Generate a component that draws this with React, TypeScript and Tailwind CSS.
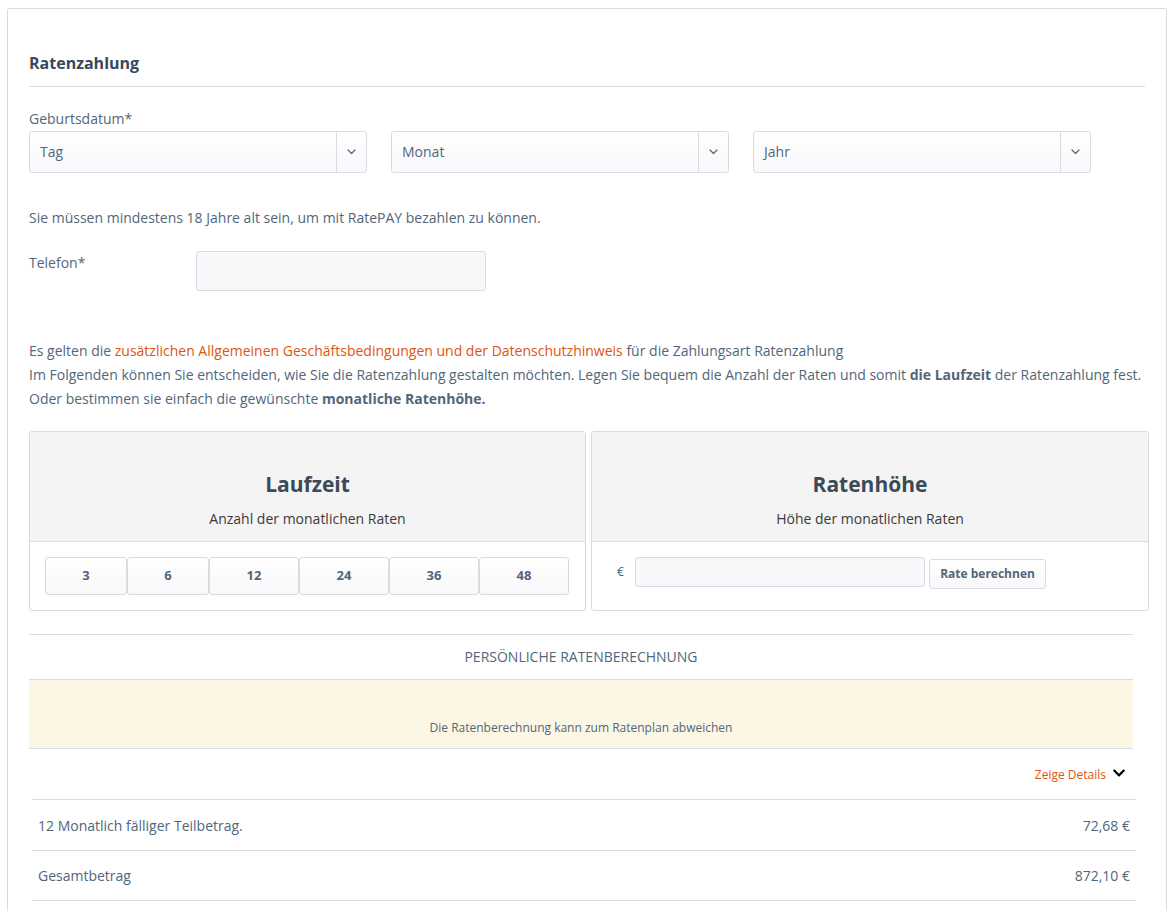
import React from "react";
import { FaChevronDown } from "react-icons/fa";

function Chevron() {
  return (
    <svg width="9" height="6" viewBox="0 0 9 6" fill="none">
      <path d="M1 1l3.5 3.5L8 1" stroke="#52667a" strokeWidth="1.2" strokeLinecap="round" strokeLinejoin="round" />
    </svg>
  );
}

function Select({ label }: { label: string }) {
  return (
    <div className="flex h-[42px] w-[338px] rounded-[3px] border border-[#dadae5] bg-gradient-to-b from-white to-[#f8f8fa]">
      <div className="flex flex-1 items-center pb-[1px] pl-[10px] text-[14px] text-[#52667a]">{label}</div>
      <div className="flex w-[30px] items-center justify-center border-l border-[#dadae5]">
        <Chevron />
      </div>
    </div>
  );
}

const rates = [
  { v: "3", w: "w-[82px]" },
  { v: "6", w: "w-[82px]" },
  { v: "12", w: "w-[90px]" },
  { v: "24", w: "w-[90px]" },
  { v: "36", w: "w-[90px]" },
  { v: "48", w: "w-[90px]" },
];

export default function App() {
  return (
    <div className="min-h-[911px] bg-white font-['Open_Sans',sans-serif] text-[#52667a]">
      <div className="ml-[7px] mt-[8px] w-[1160px] rounded-t-[3px] border border-b-0 border-[#dadae5] pb-[20px]">
        <div className="px-[21px] pt-[44px]">
          <div className="border-b border-[#dadae5] pb-[13px] text-[16px] font-bold leading-[20px] text-[#37495a]">
            Ratenzahlung
          </div>

          <div className="mt-[22px] text-[14px] leading-[20px]">Geburtsdatum*</div>
          <div className="mt-[2px] flex gap-[24px]">
            <Select label="Tag" />
            <Select label="Monat" />
            <Select label="Jahr" />
          </div>

          <div className="mt-[35px] text-[14px] leading-[20px]">
            Sie müssen mindestens 18 Jahre alt sein, um mit RatePAY bezahlen zu können.
          </div>

          <div className="mt-[23px] flex items-start">
            <div className="w-[167px] pt-[2px] text-[14px] leading-[20px]">Telefon*</div>
            <div className="h-[40px] w-[290px] rounded-[3px] border border-[#dadae5] bg-[#f8f8fa]" />
          </div>

          <div className="mt-[48px] text-[14px] leading-[24px]">
            <div>
              Es gelten die{" "}
              <span className="text-[#e1540f]">
                zusätzlichen Allgemeinen Geschäftsbedingungen und der Datenschutzhinweis
              </span>{" "}
              für die Zahlungsart Ratenzahlung
            </div>
            <div>
              Im Folgenden können Sie entscheiden, wie Sie die Ratenzahlung gestalten möchten. Legen Sie bequem die
              Anzahl der Raten und somit <b>die Laufzeit</b> der Ratenzahlung fest.
            </div>
            <div>
              Oder bestimmen sie einfach die gewünschte <b>monatliche Ratenhöhe.</b>
            </div>
          </div>

          <div className="mt-[20px] flex w-[1120px] gap-[5px]">
            <div className="w-[557px] rounded-[3px] border border-[#dadae5]">
              <div className="border-b border-[#dadae5] bg-[#f4f4f4] pb-[12px] pt-[38px] text-center">
                <div className="text-[21px] font-bold leading-[28px] text-[#3c4a57]">Laufzeit</div>
                <div className="mt-[11px] text-[14px] leading-[20px] text-[#3a3a3a]">Anzahl der monatlichen Raten</div>
              </div>
              <div className="flex px-[15px] pb-[15px] pt-[15px]">
                {rates.map((r) => (
                  <div
                    key={r.v}
                    className={`${r.w} flex h-[38px] items-center justify-center rounded-[3px] border border-[#dadae5] bg-gradient-to-b from-white to-[#f8f8fa] text-[13px] font-bold text-[#52667a]`}
                  >
                    {r.v}
                  </div>
                ))}
              </div>
            </div>
            <div className="w-[558px] rounded-[3px] border border-[#dadae5]">
              <div className="border-b border-[#dadae5] bg-[#f4f4f4] pb-[12px] pt-[38px] text-center">
                <div className="text-[21px] font-bold leading-[28px] text-[#3c4a57]">Ratenhöhe</div>
                <div className="mt-[11px] text-[14px] leading-[20px] text-[#3a3a3a]">Höhe der monatlichen Raten</div>
              </div>
              <div className="flex items-start pl-[25px] pt-[15px]">
                <div className="w-[18px] pt-[6px] text-[12px] leading-[18px]">€</div>
                <div className="h-[30px] w-[290px] rounded-[3px] border border-[#dadae5] bg-[#f8f8fa]" />
                <div className="ml-[4px] mt-[2px] flex h-[30px] w-[117px] items-center justify-center rounded-[3px] border border-[#dadae5] bg-gradient-to-b from-white to-[#f8f8fa] text-[12px] font-bold text-[#52667a]">
                  Rate berechnen
                </div>
              </div>
            </div>
          </div>

          <div className="mt-[23px] w-[1104px]">
            <div className="border-t border-b border-[#dadae5] py-[11px] text-center text-[14px] uppercase leading-[22px]">
              Persönliche Ratenberechnung
            </div>
            <div className="flex h-[69px] items-end justify-center border-b border-[#dadae5] bg-[#fcf6e4] pb-[12px] text-[12px] leading-[16px]">
              Die Ratenberechnung kann zum Ratenplan abweichen
            </div>
          </div>

          <div className="ml-[3px] w-[1104px]">
            <div className="flex h-[50px] items-center justify-end gap-[6px] pr-[10px] pt-[2px]">
              <span className="text-[12px] text-[#e1540f]">Zeige Details</span>
              <FaChevronDown className="mb-[4px] text-[14px] text-black" />
            </div>
            <div className="flex h-[51px] items-center justify-between border-t border-[#dadae5] px-[6px] text-[14px]">
              <span>12 Monatlich fälliger Teilbetrag.</span>
              <span>72,68 €</span>
            </div>
            <div className="flex h-[51px] items-center justify-between border-t border-b border-[#dadae5] px-[6px] text-[14px]">
              <span>Gesamtbetrag</span>
              <span>872,10 €</span>
            </div>
          </div>
        </div>
      </div>
    </div>
  );
}
